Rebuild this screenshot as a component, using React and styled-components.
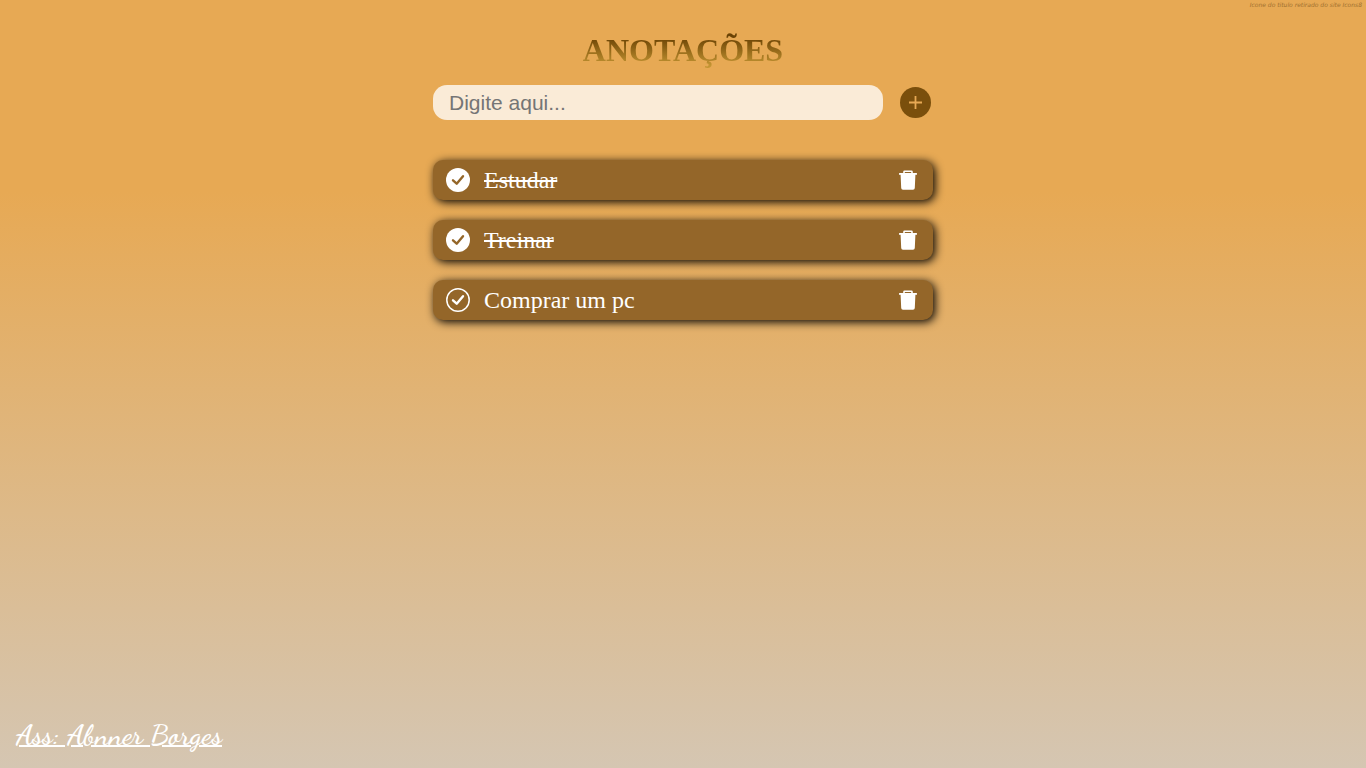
import React, { useState } from "react";
import styled, { createGlobalStyle } from "styled-components";

const GlobalStyle = createGlobalStyle`
  * { box-sizing: border-box; }
  body {
    margin: 0;
    font-family: "Liberation Serif", "Times New Roman", serif;
    background: linear-gradient(to bottom, #e7a954 0%, #e7a954 25%, #d5c6b2 100%);
  }
`;

const Page = styled.div`
  min-height: 100vh;
  display: flex;
  flex-direction: column;
`;

const Credit = styled.a`
  align-self: flex-end;
  height: 10px;
  padding-right: 4px;
  font: italic 6px/10px "DejaVu Sans", sans-serif;
  color: #a0702f;
  text-decoration: none;
`;

const Main = styled.main`
  flex: 1;
  width: 100%;
  max-width: 500px;
  margin: 0 auto;
  padding-top: 22px;
`;

const Title = styled.h1`
  margin: 0;
  font-size: 32px;
  line-height: 37px;
  text-align: center;
  text-transform: uppercase;
  color: transparent;
  background: linear-gradient(to bottom, #6b4304 15%, #c39432 90%);
  background-clip: text;
  -webkit-background-clip: text;
`;

const Form = styled.form`
  display: flex;
  align-items: center;
  gap: 16px;
  margin: 16px 0 40px;
`;

const Field = styled.input`
  flex: 1;
  min-width: 0;
  height: 35px;
  padding: 0 16px;
  border: 0;
  border-radius: 14px;
  outline: none;
  background: #faebd7;
  color: #333;
  font: 21px "Liberation Sans", Arial, sans-serif;
  &::placeholder { color: #757575; opacity: 1; }
`;

const IconButton = styled.button`
  display: flex;
  padding: 0;
  border: 0;
  background: none;
  color: ${({ $color }) => $color || "#fff"};
  cursor: pointer;
`;

const AddSlot = styled.div`
  padding-right: 2px;
`;

const List = styled.ul`
  display: flex;
  flex-direction: column;
  gap: 20px;
  margin: 0;
  padding: 0;
  list-style: none;
`;

const Note = styled.li`
  display: flex;
  align-items: center;
  gap: 14px;
  height: 40px;
  padding: 0 13px;
  border-radius: 10px;
  background: #946629;
  box-shadow: 2px 2px 10px #000;
  color: #fff;
`;

const NoteText = styled.span`
  flex: 1;
  font-size: 24px;
  line-height: 38px;
  text-decoration: ${({ $done }) => ($done ? "line-through" : "none")};
`;

const Footer = styled.footer`
  padding: 0 16px 16px;
`;

const Signature = styled.a`
  font-family: "Dancing Script", "Liberation Serif", cursive;
  font-size: 29px;
  line-height: 34px;
  font-weight: 600;
  text-decoration-thickness: 2px;
  color: #fff;
`;

const CheckIcon = ({ filled }) => (
  <svg width="24" height="24" viewBox="0 0 24 24" fill="none" aria-hidden="true">
    <circle cx="12" cy="12" r={filled ? 12 : 11.2} fill={filled ? "currentColor" : "none"} stroke={filled ? "none" : "currentColor"} strokeWidth="1.5" />
    <path d="M7 12.3 L10.7 15.7 L17 8.2" stroke={filled ? "#946629" : "currentColor"} strokeWidth="2.4" strokeLinecap="round" strokeLinejoin="round" />
  </svg>
);

const TrashIcon = () => (
  <svg width="24" height="24" viewBox="0 0 24 24" fill="none" aria-hidden="true">
    <path d="M8 5V3.8Q8 3.2 8.6 3.2H15.4Q16 3.2 16 3.8V5" stroke="currentColor" strokeWidth="1.6" />
    <path d="M3.4 5H20.6Q21 5 21 5.4V6.4Q21 6.8 20.6 6.8H19.4L18.8 20Q18.7 21.7 17 21.7H7Q5.3 21.7 5.2 20L4.6 6.8H3.4Q3 6.8 3 6.4V5.4Q3 5 3.4 5Z" fill="currentColor" />
  </svg>
);

const PlusIcon = () => (
  <svg width="32" height="32" viewBox="0 0 32 32" fill="none" aria-hidden="true">
    <circle cx="16.5" cy="15.5" r="15.5" fill="currentColor" />
    <path d="M16.5 9V22M10 15.5H23" stroke="#e7a954" strokeWidth="1.8" />
  </svg>
);

export default function App() {
  const [draft, setDraft] = useState("");
  const [notes, setNotes] = useState([
    { id: 1, text: "Estudar", done: true },
    { id: 2, text: "Treinar", done: true },
    { id: 3, text: "Comprar um pc", done: false },
  ]);

  const add = (event) => {
    event.preventDefault();
    if (!draft.trim()) return;
    setNotes([...notes, { id: Date.now(), text: draft.trim(), done: false }]);
    setDraft("");
  };
  const toggle = (id) => setNotes(notes.map((n) => (n.id === id ? { ...n, done: !n.done } : n)));
  const remove = (id) => setNotes(notes.filter((n) => n.id !== id));

  return (
    <Page>
      <GlobalStyle />
      <Credit href="#icons8">Icone do titulo retirado do site Icons8</Credit>
      <Main>
        <Title>Anotações</Title>
        <Form onSubmit={add}>
          <Field aria-label="Nova anotação" placeholder="Digite aqui..." value={draft} onChange={(e) => setDraft(e.target.value)} />
          <AddSlot>
            <IconButton type="submit" aria-label="Adicionar" $color="#7a4f0c"><PlusIcon /></IconButton>
          </AddSlot>
        </Form>
        <List>
          {notes.map((note) => (
            <Note key={note.id}>
              <IconButton type="button" aria-label="Concluir" aria-pressed={note.done} onClick={() => toggle(note.id)}>
                <CheckIcon filled={note.done} />
              </IconButton>
              <NoteText $done={note.done}>{note.text}</NoteText>
              <IconButton type="button" aria-label="Excluir" onClick={() => remove(note.id)}><TrashIcon /></IconButton>
            </Note>
          ))}
        </List>
      </Main>
      <Footer>
        <Signature href="#autor">Ass: Abnner Borges</Signature>
      </Footer>
    </Page>
  );
}
